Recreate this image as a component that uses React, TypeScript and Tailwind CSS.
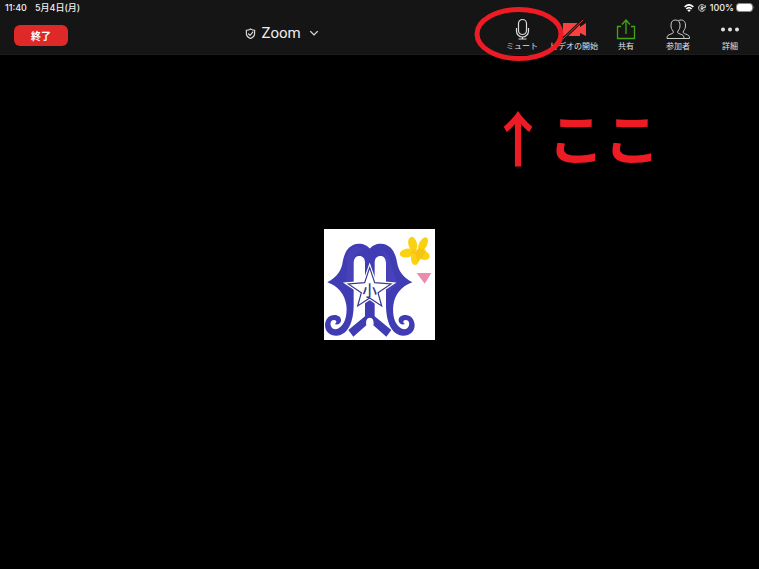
import type { ReactNode } from "react";

function Tool({ label, children, mark }: { label: string; children: ReactNode; mark?: ReactNode }) {
  return (
    <div className="relative w-[52px]">
      <button type="button" className="flex w-full flex-col items-center">
        <svg viewBox="0 0 26 24" className="h-6 w-[26px]" fill="none" aria-hidden="true">
          {children}
        </svg>
        <span className="whitespace-nowrap text-[8px] leading-2 text-[#e0e0e0]">{label}</span>
      </button>
      {mark}
    </div>
  );
}

function StatusBar() {
  return (
    <div className="flex h-[15px] items-center justify-between pl-[5px] pr-1 text-[9px] font-medium leading-3 text-[#f0f0f0]">
      <div className="flex gap-2">
        <span>11:40</span>
        <span>5月4日(月)</span>
      </div>
      <div className="flex items-center">
        <svg viewBox="0 0 30 24" className="mr-1 h-2 w-2.5" aria-hidden="true" fill="none" stroke="#fff" strokeWidth="5">
          <path d="M2 9C10 1 20 1 28 9M7 15c5-5 11-5 16 0" />
          <path d="M10 19c3-3 7-3 10 0l-5 5Z" fill="#fff" stroke="none" />
        </svg>
        <svg viewBox="0 0 24 24" className="mr-1 size-2" aria-hidden="true" fill="none" stroke="#ddd" strokeWidth="3">
          <path d="M20 6a10 10 0 1 0 1 10M22 4v7h-7" />
          <rect x="8" y="11" width="8" height="6" fill="#ddd" stroke="none" />
          <path d="M9.500 11V9a2.500 2.500 0 0 1 5 0v2" />
        </svg>
        <span className="mr-0.5">100%</span>
        <svg viewBox="0 0 19 9" className="h-[9px] w-[19px]" aria-hidden="true">
          <rect x=".5" y=".5" width="16" height="8" rx="2.500" fill="none" stroke="#888" />
          <rect x="1" y="1" width="15" height="7" rx="2" fill="#fff" />
          <path d="M17.500 3q1.500 1.500 0 3Z" fill="#999" />
        </svg>
      </div>
    </div>
  );
}

function EmblemHalf() {
  return (
    <path
      fill="#3f3cb4"
      d="M28 178C58 161 70 143 74 117C80 83 94 64 122 62C138 62 148 68 156 77V284C147 284 142 293 145 307L106 341L91 321L141 280V118C141 106 134 99 124 99C113 99 107 107 107 122V246C107 295 91 337 55 338C35 338 21 326 21 306C22 288 33 276 49 276C63 276 70 284 69 294C67 303 59 306 50 303C58 299 56 291 48 291C40 291 36 298 38 307C41 318 51 322 62 316C82 304 88 275 85 247C80 213 62 191 28 178Z"
    />
  );
}

function Emblem() {
  return (
    <svg viewBox="18 18 333 333" className="size-[111px] bg-white" role="img" aria-label="校章">
      <EmblemHalf />
      <g transform="translate(311 0) scale(-1 1)">
        <EmblemHalf />
      </g>
      <path d="M84 105q6-28 32-35l20 12q-24 6-30 26l-1 60-24 14q10-40 3-77ZM186 82q26 0 32 40l19 57-30 35-3-96q0-26-18-36Z" fill="#554bc2" opacity=".4" />
      <path
        d="M155 132L171 178L222 182L181 209L192 251L155 226L118 251L129 209L88 182L139 178Z"
        fill="#fff"
        stroke="#fff"
        strokeWidth="9"
      />
      <path
        d="M155 134L170 179L219 183L180 209L191 249L155 225L119 249L130 209L91 183L140 179Z"
        fill="#fff"
        stroke="#373591"
        strokeWidth="3.500"
      />
      <text x="155" y="219" textAnchor="middle" fontSize="44" fontWeight="500" fill="#39378b" className="font-['Noto_Sans_CJK_JP',sans-serif]">
        小
      </text>
      <g fill="#fbd113">
        <ellipse cx="284" cy="63" rx="13" ry="22" transform="rotate(-14 284 63)" />
        <ellipse cx="315" cy="64" rx="12" ry="23" transform="rotate(28 315 64)" />
        <ellipse cx="314" cy="95" rx="22" ry="14" transform="rotate(24 314 95)" />
        <ellipse cx="292" cy="105" rx="13" ry="21" transform="rotate(4 292 105)" />
        <ellipse cx="267" cy="90" rx="22" ry="13" transform="rotate(-12 267 90)" />
      </g>
      <path d="M276 89q28-20 49-8l-12 22q-6 10-15 12l-5-22Z" fill="#f5ba11" opacity=".6" />
      <path d="M296 150H340L320 182Z" fill="#ef8baa" />
    </svg>
  );
}

export default function App() {
  return (
    <div className="relative flex min-h-screen flex-col bg-black font-['Inter','Noto_Sans_CJK_JP',sans-serif] text-white">
      <header className="border-b border-[#1c1c1c] bg-[#151515]">
        <StatusBar />
        <div className="grid h-[39px] grid-cols-[5fr_auto_9fr]">
          <div className="pl-3.5 pt-2.5">
            <button
              type="button"
              className="flex h-[21px] w-[54px] items-center justify-center rounded-md bg-[#df2828] text-[10px] font-bold leading-4"
            >
              終了
            </button>
          </div>
          <button type="button" className="flex h-9 items-center font-['Roboto',sans-serif] text-[15px] text-[#eee]">
            <svg viewBox="0 0 24 24" className="mr-1.5 size-[11px]" fill="none" stroke="#ddd" strokeWidth="2.500" aria-hidden="true">
              <path d="M12 2q5 3 9 3v7q0 7-9 11Q3 19 3 12V5q5 0 9-3Z" />
              <path d="m7 12 4 4 7-8" />
            </svg>
            <span>Zoom</span>
            <svg viewBox="0 0 8 8" className="ml-2 size-2.5" fill="none" stroke="#ddd" strokeWidth="1.100" aria-hidden="true">
              <path d="m1 2.500 3 3 3-3" />
            </svg>
          </button>
          <nav className="flex justify-end pr-[3px] pt-[3px]" aria-label="会議ツール">
            <Tool
              label="ミュート"
              mark={
                <svg viewBox="0 0 90 56" className="pointer-events-none absolute -left-[22px] -top-3 z-10 h-14 w-[90px] max-w-none" aria-hidden="true">
                  <ellipse cx="45" cy="28" rx="42" ry="24.500" fill="none" stroke="#ed1c24" strokeWidth="5" />
                </svg>
              }
            >
              <rect x="9.500" y="1.500" width="8" height="15" rx="4" stroke="#ddd" strokeWidth="1.200" />
              <path d="M7.500 10v3a6 6 0 0 0 12 0v-3M13.500 19v2M9.500 21h8" stroke="#ddd" strokeWidth="1.200" />
            </Tool>
            <Tool label="ビデオの開始">
              <path d="M2 5h17v4l6-4v13l-6-3v3H2Z" fill="#fa4141" />
              <path d="M2 21 22 2" stroke="#151515" strokeWidth="3" />
              <path d="M2 21 22 2" stroke="#d93232" />
            </Tool>
            <Tool label="共有">
              <path d="M8 8.500H4.500v12h17v-12H18M13 16V2M9 6.500 13 2l4 4.500" stroke="#43a516" strokeWidth="1.300" />
            </Tool>
            <Tool label="参加者">
              <path
                d="M2 20.500c0-3 1-3.500 4-4.500 2-.7 3-1.300 2-3-1.500-2-2-3-2-6 0-3 1.500-5 4.500-5s4.500 2 4.500 5c0 3-.5 4-2 6-1 1.700 0 2.300 2 3 3 1 4 1.500 4 4.500ZM13.500 2.500c4-1.500 7 .5 7 4.500 0 3-.5 4-2 6-1 1.700 0 2.300 2 3 3 1 4 1.500 4 4.500H19"
                stroke="#ccc"
              />
            </Tool>
            <Tool label="詳細">
              <g fill="#e2e2e2">
                <circle cx="6" cy="11.500" r="2" />
                <circle cx="13" cy="11.500" r="2" />
                <circle cx="20" cy="11.500" r="2" />
              </g>
            </Tool>
          </nav>
        </div>
      </header>
      <p className="pointer-events-none absolute right-[99px] top-[106px] flex items-center font-['Noto_Sans_CJK_JP',sans-serif] font-bold leading-[60px] text-[#ed1c24]">
        <span className="text-[60px]">↑</span>
        <span className="text-[56px]">ここ</span>
      </p>
      <main className="flex flex-1 items-center justify-center pb-[55px]">
        <Emblem />
      </main>
    </div>
  );
}
